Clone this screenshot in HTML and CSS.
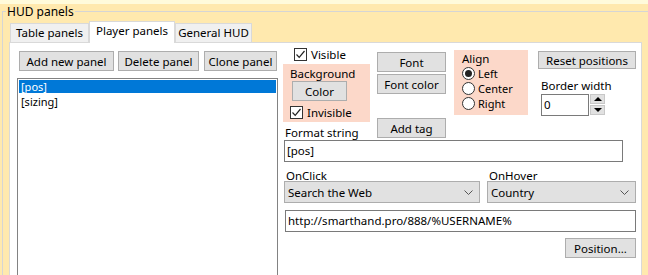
FILE: index.html
```html
<!DOCTYPE html>
<html lang="en">
<head>
    <meta charset="UTF-8">
    <title>HUD panels</title>
    <link rel="stylesheet" href="styles.css">
</head>
<body>
    <div class="topbar"></div>
    <fieldset class="hud">
        <legend>HUD panels</legend>

        <div class="tabs">
            <div class="tab tab-table">Table panels</div>
            <div class="tab tab-player active">Player panels</div>
            <div class="tab tab-general">General HUD</div>
        </div>

        <div class="page">
            <!-- left: panel list -->
            <div class="left-col">
                <div class="btn-row">
                    <button class="btn btn-add">Add new panel</button>
                    <button class="btn btn-delete">Delete panel</button>
                    <button class="btn btn-clone">Clone panel</button>
                </div>
                <div class="listbox">
                    <div class="list-item selected">[pos]</div>
                    <div class="list-item">[sizing]</div>
                </div>
            </div>

            <!-- right: panel settings -->
            <div class="right-col">
                <div class="top-area">
                    <div class="col col-bg">
                        <label class="check check-visible"><span class="box"><svg width="11" height="11" viewBox="0 0 11 11"><path d="M1.5 5.5 L4.2 8.3 L9.5 2" fill="none" stroke="#222" stroke-width="1.2"/></svg></span>Visible</label>
                        <fieldset class="pink-group bg-group">
                            <legend>Background</legend>
                            <button class="btn btn-color">Color</button>
                            <label class="check check-invisible"><span class="box"><svg width="11" height="11" viewBox="0 0 11 11"><path d="M1.5 5.5 L4.2 8.3 L9.5 2" fill="none" stroke="#222" stroke-width="1.2"/></svg></span>Invisible</label>
                        </fieldset>
                        <div class="label format-label">Format string</div>
                    </div>

                    <div class="col col-font">
                        <button class="btn btn-wide">Font</button>
                        <button class="btn btn-wide btn-fontcolor">Font color</button>
                        <button class="btn btn-wide btn-addtag">Add tag</button>
                    </div>

                    <div class="col col-align">
                        <fieldset class="pink-group align-group">
                            <legend>Align</legend>
                            <label class="radio"><span class="dot checked"></span>Left</label>
                            <label class="radio"><span class="dot"></span>Center</label>
                            <label class="radio"><span class="dot"></span>Right</label>
                        </fieldset>
                    </div>

                    <div class="col col-border">
                        <button class="btn btn-reset">Reset positions</button>
                        <div class="label border-label">Border width</div>
                        <div class="spin">
                            <div class="textbox spin-input">0</div>
                            <div class="spin-btns">
                                <div class="spin-btn"><span class="tri-up"></span></div>
                                <div class="spin-btn"><span class="tri-down"></span></div>
                            </div>
                        </div>
                    </div>
                </div>

                <div class="textbox format-input">[pos]</div>

                <div class="select-row">
                    <div class="select-field onclick-field">
                        <div class="label">OnClick</div>
                        <div class="select">Search the Web<svg class="chev" width="9" height="5" viewBox="0 0 9 5"><path d="M0.5 0.5 L4.5 4.5 L8.5 0.5" fill="none" stroke="#555" stroke-width="1"/></svg></div>
                    </div>
                    <div class="select-field onhover-field">
                        <div class="label">OnHover</div>
                        <div class="select">Country<svg class="chev" width="9" height="5" viewBox="0 0 9 5"><path d="M0.5 0.5 L4.5 4.5 L8.5 0.5" fill="none" stroke="#555" stroke-width="1"/></svg></div>
                    </div>
                </div>

                <div class="textbox url-input">http://smarthand.pro/888/%USERNAME%</div>

                <div class="pos-row">
                    <button class="btn btn-position">Position...</button>
                </div>
            </div>
        </div>
    </fieldset>
</body>
</html>
```

FILE: styles.css
```css
body {
    margin: 0;
    height: 275px;
    overflow: hidden;
    background-color: #FFE9AE;
    font-family: "Noto Sans", "DejaVu Sans", sans-serif;
    font-size: 11.5px;
    color: #000;
}

.topbar {
    height: 4px;
    background-color: #FFFBDB;
}

.hud {
    margin: 0 0 0 2px;
    padding: 0 0 0 6px;
    width: 660px;
    border: 1px solid #D5D5D5;
    border-bottom: none;
}

.hud > legend {
    margin-left: -3px;
    padding: 0 1px;
    line-height: 15px;
    font-size: 12px;
}

/* tabs */
.tabs {
    display: flex;
    align-items: flex-end;
    height: 21px;
    margin-top: 2px;
    padding-left: 1px;
}

.tab {
    height: 19px;
    line-height: 18px;
    background-color: #F0F0F0;
    border: 1px solid #D9D9D9;
    border-bottom: none;
    box-sizing: border-box;
    text-align: center;
}

.tab-table { width: 79px; }
.tab-player { width: 86px; }
.tab-general { width: 77px; }

.tab.active {
    height: 22px;
    line-height: 18px;
    background-color: #fff;
    margin-bottom: -1px;
    position: relative;
    z-index: 1;
}

.page {
    display: flex;
    width: 631px;
    height: 240px;
    background-color: #fff;
    border: 1px solid #D9D9D9;
}

/* buttons */
.btn {
    display: block;
    box-sizing: border-box;
    height: 20px;
    padding: 0;
    margin: 0;
    background-color: #E1E1E1;
    border: 1px solid #ADADAD;
    font-family: inherit;
    font-size: 11.5px;
    color: #000;
    line-height: 17px;
    text-align: center;
}

/* left column */
.left-col {
    padding: 8px 0 0 7px;
}

.btn-row {
    display: flex;
    margin-left: 2px;
}

.btn-add { width: 95px; margin-right: 4px; }
.btn-delete { width: 81px; margin-right: 5px; }
.btn-clone { width: 73px; }

.listbox {
    width: 261px;
    height: 200px;
    margin-top: 7px;
    padding: 1px;
    box-sizing: border-box;
    border: 1px solid #828282;
    font-size: 11px;
}

.list-item {
    height: 14px;
    line-height: 14px;
    padding-left: 2px;
}

.list-item.selected {
    height: 13px;
    line-height: 13px;
    margin-bottom: 2px;
    background-color: #0078D7;
    color: #fff;
}

/* right column */
.right-col {
    margin-left: 5px;
    width: 353px;
}

.top-area {
    display: flex;
    height: 97px;
}

.col {
    display: flex;
    flex-direction: column;
}

.col-bg { width: 87px; }
.col-font { width: 69px; margin-left: 7px; padding-top: 9px; }
.col-align { width: 74px; margin-left: 8px; padding-top: 7px; }
.col-border { width: 98px; margin-left: 10px; padding-top: 8px; }

.check {
    display: flex;
    align-items: center;
    height: 14px;
}

.box {
    display: flex;
    align-items: center;
    justify-content: center;
    width: 13px;
    height: 13px;
    box-sizing: border-box;
    border: 1px solid #333;
    background-color: #fff;
    margin-right: 4px;
}

.check-visible {
    margin: 4px 0 0 11px;
}

.pink-group {
    margin: 3px 0 0;
    padding: 0;
    width: 87px;
    box-sizing: border-box;
    background-color: #FCD8C9;
    border: none;
}

.pink-group > legend {
    float: left;
    width: 100%;
    padding: 0;
    line-height: 15px;
}

.bg-group {
    height: 59px;
    padding: 2px 0 0 7px;
}

.btn-color {
    clear: left;
    width: 55px;
    margin: 1px 0 0 2px;
}

.check-invisible {
    margin-top: 4px;
}

.format-label {
    margin: 3px 0 0 2px;
    line-height: 15px;
}

.btn-wide { width: 69px; }
.btn-fontcolor { margin-top: 2px; }
.btn-addtag { margin-top: 24px; }

.align-group {
    width: 74px;
    height: 65px;
    margin: 0;
    padding: 1px 0 0 8px;
}

.radio {
    clear: left;
    display: flex;
    align-items: center;
    height: 15px;
    font-size: 11px;
    line-height: 15px;
}

.dot {
    width: 13px;
    height: 13px;
    box-sizing: border-box;
    border: 1px solid #333;
    border-radius: 50%;
    background-color: #fff;
    margin-right: 3px;
    display: flex;
    align-items: center;
    justify-content: center;
}

.dot.checked::after {
    content: "";
    width: 7px;
    height: 7px;
    border-radius: 50%;
    background-color: #222;
}

.btn-reset {
    width: 98px;
    height: 18px;
    line-height: 15px;
}

.border-label {
    margin: 9px 0 0 3px;
    line-height: 15px;
}

.spin {
    display: flex;
    margin: 1px 0 0 3px;
}

.textbox {
    box-sizing: border-box;
    height: 22px;
    line-height: 20px;
    padding-left: 2px;
    border: 1px solid #7A7A7A;
    background-color: #fff;
}

.spin-input {
    width: 48px;
    height: 22px;
}

.spin-btns {
    display: flex;
    flex-direction: column;
    margin-left: 1px;
}

.spin-btn {
    width: 15px;
    height: 10px;
    margin-bottom: 1px;
    box-sizing: border-box;
    background-color: #E1E1E1;
    border: 1px solid #C8C8C8;
    display: flex;
    align-items: center;
    justify-content: center;
}

.tri-up {
    border-left: 4px solid transparent;
    border-right: 4px solid transparent;
    border-bottom: 4px solid #000;
}

.tri-down {
    border-left: 4px solid transparent;
    border-right: 4px solid transparent;
    border-top: 4px solid #000;
}

.format-input {
    width: 339px;
    margin-left: 1px;
}

.select-row {
    display: flex;
    margin-top: 6px;
    margin-left: 1px;
}

.select-field .label {
    padding-left: 2px;
    line-height: 15px;
    height: 13px;
}

.select {
    display: flex;
    align-items: center;
    justify-content: space-between;
    box-sizing: border-box;
    height: 22px;
    padding: 0 6px 0 3px;
    background-color: #E1E1E1;
    border: 1px solid #ADADAD;
}

.onclick-field .select { width: 196px; }
.onhover-field { margin-left: 7px; }
.onhover-field .select { width: 149px; }

.url-input {
    width: 351px;
    margin: 7px 0 0 2px;
}

.pos-row {
    display: flex;
    justify-content: flex-end;
    width: 353px;
    margin-top: 6px;
}

.btn-position {
    width: 71px;
}
```
